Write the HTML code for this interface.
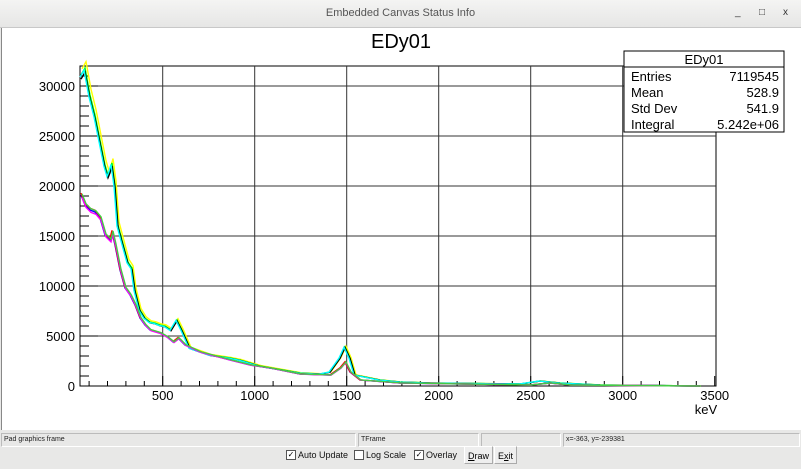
<!DOCTYPE html>
<html><head><meta charset="utf-8"><style>
body{margin:0;width:801px;height:469px;overflow:hidden;background:#e8e8e7;font-family:"Liberation Sans",sans-serif;position:relative}
#title{position:absolute;left:0;top:0;width:801px;height:27px;background:linear-gradient(#f4f4f3,#e6e6e5);border-bottom:1px solid #c8c8c8;font-size:11px;color:#555;text-align:center;line-height:27px}
.ctl{position:absolute;top:7px;font-size:10px;color:#333}
#canvas{position:absolute;left:1px;top:28px;width:799px;height:402px;background:#fff;border-left:1px solid #888}
.sb{position:absolute;top:433px;border:1px solid #bbb;border-right-color:#fff;border-bottom-color:#fff;font-size:7px;line-height:12px;padding-left:2px;color:#222;box-sizing:border-box;height:14px}
.bt{position:absolute;top:449px;font-size:9px;color:#111;line-height:12px;white-space:nowrap}
.cb{position:absolute;top:450px;width:8px;height:8px;border:1px solid #555;background:#fff;font-size:8px;line-height:8px;text-align:center}
.btn{position:absolute;top:446px;height:18px;box-sizing:border-box;border:1px solid #aaa;border-top-color:#fff;border-left-color:#fff;background:#eee;font-size:9px;line-height:18px;padding:0 3px}
</style></head><body>
<div id="title">Embedded Canvas Status Info</div>
<div class="ctl" style="left:735px">_</div><div class="ctl" style="left:759px">□</div><div class="ctl" style="left:783px">x</div>
<div id="canvas"></div>
<svg width="801" height="469" style="position:absolute;left:0;top:0" id="s"></svg>
<div class="sb" style="left:1px;width:355px">Pad graphics frame</div>
<div class="sb" style="left:358px;width:121px">TFrame</div>
<div class="sb" style="left:481px;width:80px"></div>
<div class="sb" style="left:563px;width:237px">x=-363, y=-239381</div>
<div class="cb" style="left:286px">✓</div><div class="bt" style="left:298px">Auto Update</div>
<div class="cb" style="left:354px"></div><div class="bt" style="left:366px">Log Scale</div>
<div class="cb" style="left:414px">✓</div><div class="bt" style="left:426px">Overlay</div>
<div class="btn" style="left:464px"><u>D</u>raw</div>
<div class="btn" style="left:494px">E<u>x</u>it</div>
<script>
var s=document.getElementById('s'),h='';
var L=80,R=716,T=66,B=386;
function X(k){return 162.7+(k-500)*0.184}
h+='<rect x="'+L+'" y="'+T+'" width="'+(R-L)+'" height="'+(B-T)+'" fill="none" stroke="#000" stroke-width="1"/>';
for(var k=500;k<=3000;k+=500)h+='<line x1="'+X(k)+'" y1="'+T+'" x2="'+X(k)+'" y2="'+B+'" stroke="#333" stroke-width="1"/>';
for(var v=5000;v<=30000;v+=5000){var y=B-v/100;h+='<line x1="'+L+'" y1="'+y+'" x2="'+R+'" y2="'+y+'" stroke="#333"/>';}
for(var v=0;v<=31000;v+=1000){var y=B-v/100;h+='<line x1="'+L+'" y1="'+y+'" x2="'+(L+(v%5000?9:18))+'" y2="'+y+'" stroke="#000"/>';if(v%5000==0)h+='<text x="75" y="'+(y+5)+'" font-size="13" text-anchor="end">'+v+'</text>';}
for(var k=100;k<=3500;k+=100){var x=X(k);if(x<L)continue;h+='<line x1="'+x+'" y1="'+B+'" x2="'+x+'" y2="'+(B-(k%500?5:10))+'" stroke="#000"/>';if(k%500==0)h+='<text x="'+x+'" y="400" font-size="13" text-anchor="middle">'+k+'</text>';}
h+='<text x="706" y="414" font-size="13" text-anchor="middle">keV</text>';
h+='<text x="401" y="48" font-size="20" text-anchor="middle">EDy01</text>';
var hi=[[81,75],[85,68],[90,95],[95,115],[100,140],[105,165],[108,175],[110,170],[112,163],[115,185],[118,225],[122,240],[128,262],[132,268],[135,290],[140,310],[145,318],[150,322],[155,323],[160,325],[165,326],[171,330],[177,320],[182,330],[190,348],[210,355],[230,358],[240,360],[250,363],[260,366],[300,373],[320,374],[330,372],[340,358],[345,347],[350,358],[355,375],[380,380],[400,382],[430,383],[520,384],[540,381],[560,383],[600,385],[700,386]];
var lo=[[81,195],[85,205],[90,210],[95,212],[100,218],[105,235],[110,240],[112,232],[115,245],[120,270],[125,288],[130,295],[135,305],[140,318],[145,325],[150,330],[160,333],[167,337],[173,342],[178,338],[185,345],[200,352],[230,360],[250,365],[270,368],[300,374],[330,375],[340,368],[345,362],[350,372],[360,380],[400,383],[530,385],[550,383],[570,385],[700,386]];
function P(a,dy,dx,c){var p=a.map(function(q){var y=q[1];return (q[0]+dx)+','+Math.min(386,y+dy*(386-y)/300)}).join(' ');h+='<polyline points="'+p+'" fill="none" stroke="'+c+'" stroke-width="1.4"/>';}
P(hi,-6,1,'#ff0');P(hi,0,0,'#0f0');P(hi,4,0,'#000');P(hi,2,-1,'#0ff');
P(lo,0,0,'#00f');P(lo,-3,0,'#f00');P(lo,4,1,'#f0f');P(lo,-2,1,'#4c4');
h+='<rect x="624" y="51" width="160" height="81" fill="#fff" stroke="#000"/><line x1="624" y1="67" x2="784" y2="67" stroke="#000"/>';
h+='<text x="704" y="64" font-size="13" text-anchor="middle">EDy01</text>';
var st=[['Entries','7119545'],['Mean','528.9'],['Std Dev','541.9'],['Integral','5.242e+06']];
st.forEach(function(r,i){var y=81+i*16;h+='<text x="631" y="'+y+'" font-size="13">'+r[0]+'</text><text x="779" y="'+y+'" font-size="13" text-anchor="end">'+r[1]+'</text>';});
s.innerHTML=h;
</script>
</body></html>
